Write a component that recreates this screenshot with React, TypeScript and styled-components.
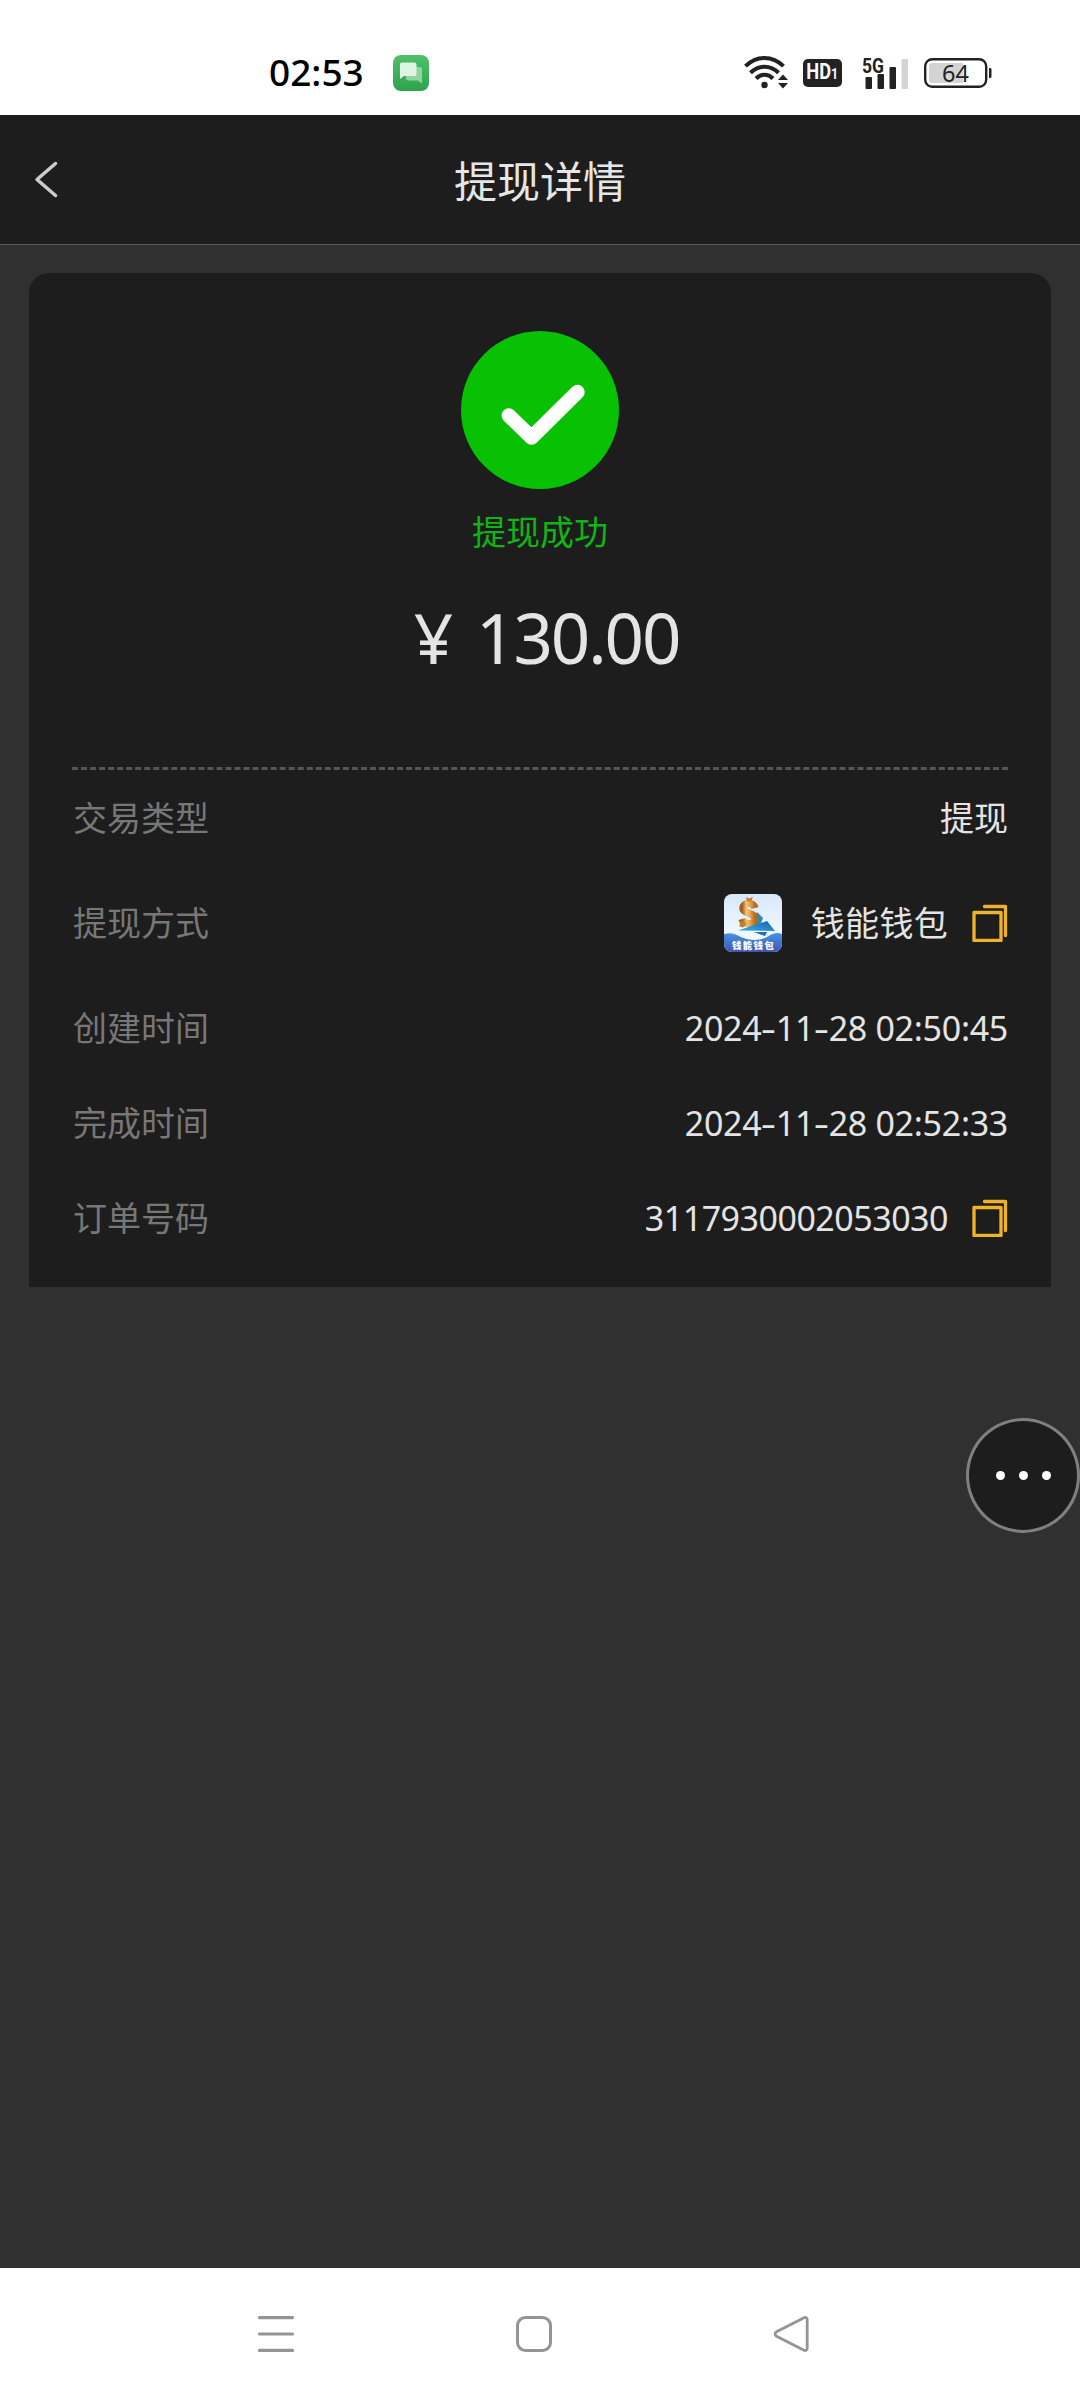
import React from 'react';
import styled, { createGlobalStyle } from 'styled-components';

const GlobalStyle = createGlobalStyle`
  * { box-sizing: border-box; }
  body {
    margin: 0;
    background: #303030;
    font-family: "Noto Sans", "Noto Sans CJK SC", sans-serif;
  }
  svg { display: block; flex: none; }
`;

const Screen = styled.div`
  position: relative;
  display: flex;
  flex-direction: column;
  width: 1080px;
  height: 2400px;
  background: #303030;
  overflow: hidden;
`;

const StatusBar = styled.header`
  display: flex;
  justify-content: space-between;
  align-items: center;
  height: 115px;
  padding: 30px 88px 0 269px;
  background: #fff;
`;

const StatusGroup = styled.div<{ $gap: number }>`
  display: flex;
  align-items: center;
  gap: ${(p) => p.$gap}px;
`;

const Clock = styled.span`
  width: 96px;
  margin-top: -2px;
  font-size: 37px;
  line-height: 40px;
  font-weight: 500;
  letter-spacing: 0;
  color: #000;
  white-space: nowrap;
`;

const TitleBar = styled.div`
  display: grid;
  grid-template-columns: 120px 1fr 120px;
  align-items: center;
  height: 130px;
  background: #1d1d1d;
  border-bottom: 1px solid #5a5a5a;
`;

const BackButton = styled.button`
  padding: 0 0 0 34px;
  border: 0;
  background: none;
`;

const Title = styled.h1`
  margin: 4px 0 0;
  font-size: 43px;
  line-height: 60px;
  font-weight: 400;
  text-align: center;
  color: #e6e6e6;
`;

const Content = styled.main`
  flex: 1;
  padding: 28px 29px 0;
`;

const Card = styled.section`
  height: 1014px;
  padding: 58px 43px 0;
  border-radius: 20px 20px 0 0;
  background: #1d1d1d;
`;

const Summary = styled.div`
  display: flex;
  flex-direction: column;
  align-items: center;
  height: 436px;
`;

const ResultText = styled.p`
  margin: 18px 0 0;
  font-size: 34px;
  line-height: 50px;
  color: #10b414;
`;

const Amount = styled.p`
  display: flex;
  gap: 25px;
  margin: 30px 0 0 13px;
  font-size: 69px;
  line-height: 100px;
  letter-spacing: -2.1px;
  color: #e4e4e4;
`;

const DetailList = styled.dl`
  margin: 0;
  border-top: 3px dashed #555;
`;

const DetailRow = styled.div<{ $tall?: boolean }>`
  display: flex;
  justify-content: space-between;
  align-items: center;
  height: ${(p) => (p.$tall ? 115 : 95)}px;
  font-size: 34px;
  line-height: 50px;
`;

const Label = styled.dt`
  padding-left: 1px;
  color: #777;
`;

const Value = styled.dd<{ $tracking?: number }>`
  display: flex;
  align-items: center;
  margin: 0;
  color: #e4e4e4;
  letter-spacing: ${(p) => p.$tracking ?? 0}px;
  white-space: pre;

  & > svg:first-child { margin-right: 29px; }
  & > svg:last-child { margin-left: 24px; }
`;

const Dash = styled.span`
  display: inline-block;
  width: 14.5px;
  text-align: center;
  transform: scaleX(1.4);
`;

const FloatingButton = styled.button`
  position: absolute;
  top: 1418px;
  right: 0;
  display: flex;
  align-items: center;
  justify-content: center;
  gap: 14px;
  width: 114px;
  height: 115px;
  padding: 0;
  border: 3px solid #808080;
  border-radius: 50%;
  background: #1d1d1d;
`;

const Dot = styled.i`
  width: 9px;
  height: 9px;
  border-radius: 50%;
  background: #fff;
`;

const NavBar = styled.nav`
  display: flex;
  justify-content: space-between;
  height: 132px;
  padding: 46px 270px 0 257px;
  background: #fff;
`;

const MessageIcon = () => (
  <svg width="36" height="36" viewBox="0 0 36 36">
    <defs>
      <linearGradient id="msg" x1="0" y1="0" x2="0" y2="1">
        <stop offset="0" stopColor="#50c06a" />
        <stop offset="1" stopColor="#2da34c" />
      </linearGradient>
    </defs>
    <rect width="36" height="36" rx="8" fill="url(#msg)" />
    <path d="M15 12h12a2 2 0 0 1 2 2v14.500l-4-3H15a2 2 0 0 1-2-2V14a2 2 0 0 1 2-2z" fill="#8fd3a0" />
    <path d="M9 7.500h12.500a2 2 0 0 1 2 2V19a2 2 0 0 1-2 2H11l-4 3V9.500a2 2 0 0 1 2-2z" fill="#e0f4e5" />
  </svg>
);

const WifiIcon = () => (
  <svg width="46" height="36" viewBox="0 0 46 36" fill="none" stroke="#222" strokeWidth="4">
    <path d="M1.500 11.200C12.500 .2 28.500 .2 39.500 11.200" />
    <path d="M6.500 17.800C14.500 9.600 26.500 9.600 34.500 17.800" />
    <path d="M12 23.500C17 18.500 24 18.500 29 23.500" />
    <circle cx="20.500" cy="30" r="3.200" fill="#222" stroke="none" />
    <path d="M34 25L39 19.500l5 5.500zM34 28L39 33.500l5-5.500z" fill="#222" stroke="none" />
  </svg>
);

const HdBadge = styled.span`
  display: flex;
  align-items: center;
  justify-content: center;
  width: 39px;
  height: 28px;
  border-radius: 5px;
  background: #222;
  color: #fff;
  font-family: Roboto, sans-serif;
  font-size: 22px;
  line-height: 28px;
  font-weight: 700;
`;

const HdLabel = styled.span`
  display: flex;
  align-items: baseline;
  transform: scaleX(0.83);

  small { font-size: 15px; }
`;

const SignalIcon = () => (
  <svg width="48" height="36" viewBox="0 0 48 36" fill="#222">
    <text x="0" y="17.500" fontFamily="Roboto, sans-serif" fontSize="20.500" fontWeight="700" textLength="22" lengthAdjust="spacingAndGlyphs">5G</text>
    <rect x="3.500" y="22" width="6.500" height="12" rx="1" />
    <rect x="15.500" y="19" width="6.500" height="15" rx="1" />
    <rect x="27.500" y="12" width="6.500" height="22" rx="1" />
    <rect x="39.500" y="4" width="6.500" height="30" rx="1" fill="#d4d4d4" />
  </svg>
);

const BatteryIcon = () => (
  <svg width="68" height="42" viewBox="0 -6 68 42">
    <rect x="1.200" y="1.200" width="61" height="27.600" rx="7" fill="#fff" stroke="#222" strokeWidth="2.400" />
    <path d="M8 5H39V25H8a3 3 0 0 1-3-3V8a3 3 0 0 1 3-3z" fill="#d4d4d4" />
    <path d="M65 10h1.200a1.500 1.500 0 0 1 1.300 1.500v7a1.500 1.500 0 0 1-1.300 1.500H65z" fill="#222" />
    <text x="31.500" y="23.600" textAnchor="middle" fontFamily="Noto Sans, sans-serif" fontSize="23.500" fill="#222">64</text>
  </svg>
);

const SuccessIcon = () => (
  <svg width="158" height="158" viewBox="0 0 158 158">
    <circle cx="79" cy="79" r="79" fill="#07c102" />
    <path d="M47.800 84.500L70.500 106.500 116.500 61" fill="none" stroke="#fff" strokeWidth="14.500" strokeLinecap="round" strokeLinejoin="round" />
  </svg>
);

const WalletIcon = () => (
  <svg width="58" height="58" viewBox="0 0 58 58">
    <defs>
      <clipPath id="tile"><rect width="58" height="58" rx="8" /></clipPath>
      <linearGradient id="sky" x1="0" y1="0" x2="0" y2="1">
        <stop offset="0" stopColor="#d6e8fc" />
        <stop offset="1" stopColor="#fff" />
      </linearGradient>
      <linearGradient id="sea" x1="0" y1="0" x2="0" y2="1">
        <stop offset="0" stopColor="#4296e6" />
        <stop offset="1" stopColor="#4553b0" />
      </linearGradient>
      <linearGradient id="gold" x1="0" y1="0" x2="1" y2="0">
        <stop offset="0" stopColor="#9c5f1c" />
        <stop offset=".35" stopColor="#f3c377" />
        <stop offset=".65" stopColor="#e3a04a" />
        <stop offset="1" stopColor="#b06d22" />
      </linearGradient>
      <linearGradient id="boat" x1="0" y1="1" x2="1" y2="0">
        <stop offset="0" stopColor="#38b0e8" />
        <stop offset="1" stopColor="#1560a8" />
      </linearGradient>
    </defs>
    <g clipPath="url(#tile)">
      <rect width="58" height="58" fill="url(#sky)" />
      <path d="M33 18l6 6-2 5-7 3z" fill="#2487cf" />
      <path d="M31 14C29 7.500 19 8 19 14.500c0 5.500 12.500 4 12 10.500C30.500 31 20 31.500 18 25" fill="none" stroke="url(#gold)" strokeWidth="7.500" />
      <path d="M22 3l3 1.500L29 3l-2 4.500h-4zM16 27l7 2-4 4.500-3.500-1z" fill="#c5802e" />
      <path d="M14 36.500L43 27l8 10z" fill="url(#boat)" />
      <path d="M30 38h13l-2 4z" fill="#176fb8" />
      <path d="M0 40c7-2 11 0 17 3 9 4 18 4 26 0 6-4 10-5 15-3v18H0z" fill="url(#sea)" />
      <text x="29" y="55" textAnchor="middle" fontFamily="Noto Sans CJK SC, sans-serif" fontSize="9.500" fontWeight="900" fill="#fff" textLength="42">钱能钱包</text>
    </g>
  </svg>
);

const CopyIcon = () => (
  <svg width="36" height="38" viewBox="0 0 36 38" fill="none" stroke="#efb32b" strokeWidth="3.300" strokeLinecap="round" strokeLinejoin="round">
    <rect x="2" y="8.500" width="27" height="28" />
    <path d="M12.500 2.500H33.500V31.500" />
  </svg>
);

interface Detail {
  label: string;
  value: string;
  tracking?: number;
  wallet?: boolean;
  copy?: boolean;
}

const details: Detail[] = [
  { label: '交易类型', value: '提现' },
  { label: '提现方式', value: '钱能钱包', tracking: 0.3, wallet: true, copy: true },
  { label: '创建时间', value: '2024-11-28 02:50:45', tracking: -0.3 },
  { label: '完成时间', value: '2024-11-28 02:52:33', tracking: -0.3 },
  { label: '订单号码', value: '3117930002053030', tracking: -0.5, copy: true },
];

const ValueText = ({ text }: { text: string }) => (
  <span>
    {text.split('-').map((part, i) => (
      <React.Fragment key={i}>
        {i > 0 && <Dash>-</Dash>}
        {part}
      </React.Fragment>
    ))}
  </span>
);

export default function App() {
  return (
    <Screen>
      <GlobalStyle />
      <StatusBar>
        <StatusGroup $gap={28}>
          <Clock>02:53</Clock>
          <MessageIcon />
        </StatusGroup>
        <StatusGroup $gap={20}>
          <StatusGroup $gap={13}>
            <WifiIcon />
            <HdBadge><HdLabel>HD<small>1</small></HdLabel></HdBadge>
          </StatusGroup>
          <StatusGroup $gap={14}>
            <SignalIcon />
            <BatteryIcon />
          </StatusGroup>
        </StatusGroup>
      </StatusBar>
      <TitleBar>
        <BackButton aria-label="返回">
          <svg width="26" height="40" viewBox="0 0 26 40" fill="none" stroke="#ccc" strokeWidth="3.500" strokeLinecap="round" strokeLinejoin="round">
            <path d="M21.500 3.500L3 19.500 21.500 35.500" />
          </svg>
        </BackButton>
        <Title>提现详情</Title>
      </TitleBar>
      <Content>
        <Card>
          <Summary>
            <SuccessIcon />
            <ResultText>提现成功</ResultText>
            <Amount><span>¥</span><span>130.00</span></Amount>
          </Summary>
          <DetailList>
            {details.map((d) => (
              <DetailRow key={d.label} $tall={d.wallet}>
                <Label>{d.label}</Label>
                <Value $tracking={d.tracking}>
                  {d.wallet && <WalletIcon />}
                  <ValueText text={d.value} />
                  {d.copy && <CopyIcon />}
                </Value>
              </DetailRow>
            ))}
          </DetailList>
        </Card>
      </Content>
      <FloatingButton aria-label="更多">
        <Dot /><Dot /><Dot />
      </FloatingButton>
      <NavBar>
        <svg width="38" height="40" viewBox="0 0 38 40" stroke="#949494" strokeWidth="3.200" strokeLinecap="round">
          <path d="M2.500 3.600h33M2.500 20h33M2.500 36.400h33" />
        </svg>
        <svg width="38" height="40" viewBox="0 0 38 40" fill="none" stroke="#949494" strokeWidth="3">
          <rect x="2.500" y="3.500" width="33" height="33" rx="8" />
        </svg>
        <svg width="38" height="40" viewBox="0 0 38 40" fill="none" stroke="#949494" strokeWidth="2.800" strokeLinejoin="round">
          <path d="M32 3.800L4.500 17.700a2.600 2.600 0 0 0 0 4.600L32 36.200a2 2 0 0 0 3.200-1.700V5.500A2 2 0 0 0 32 3.800z" />
        </svg>
      </NavBar>
    </Screen>
  );
}
